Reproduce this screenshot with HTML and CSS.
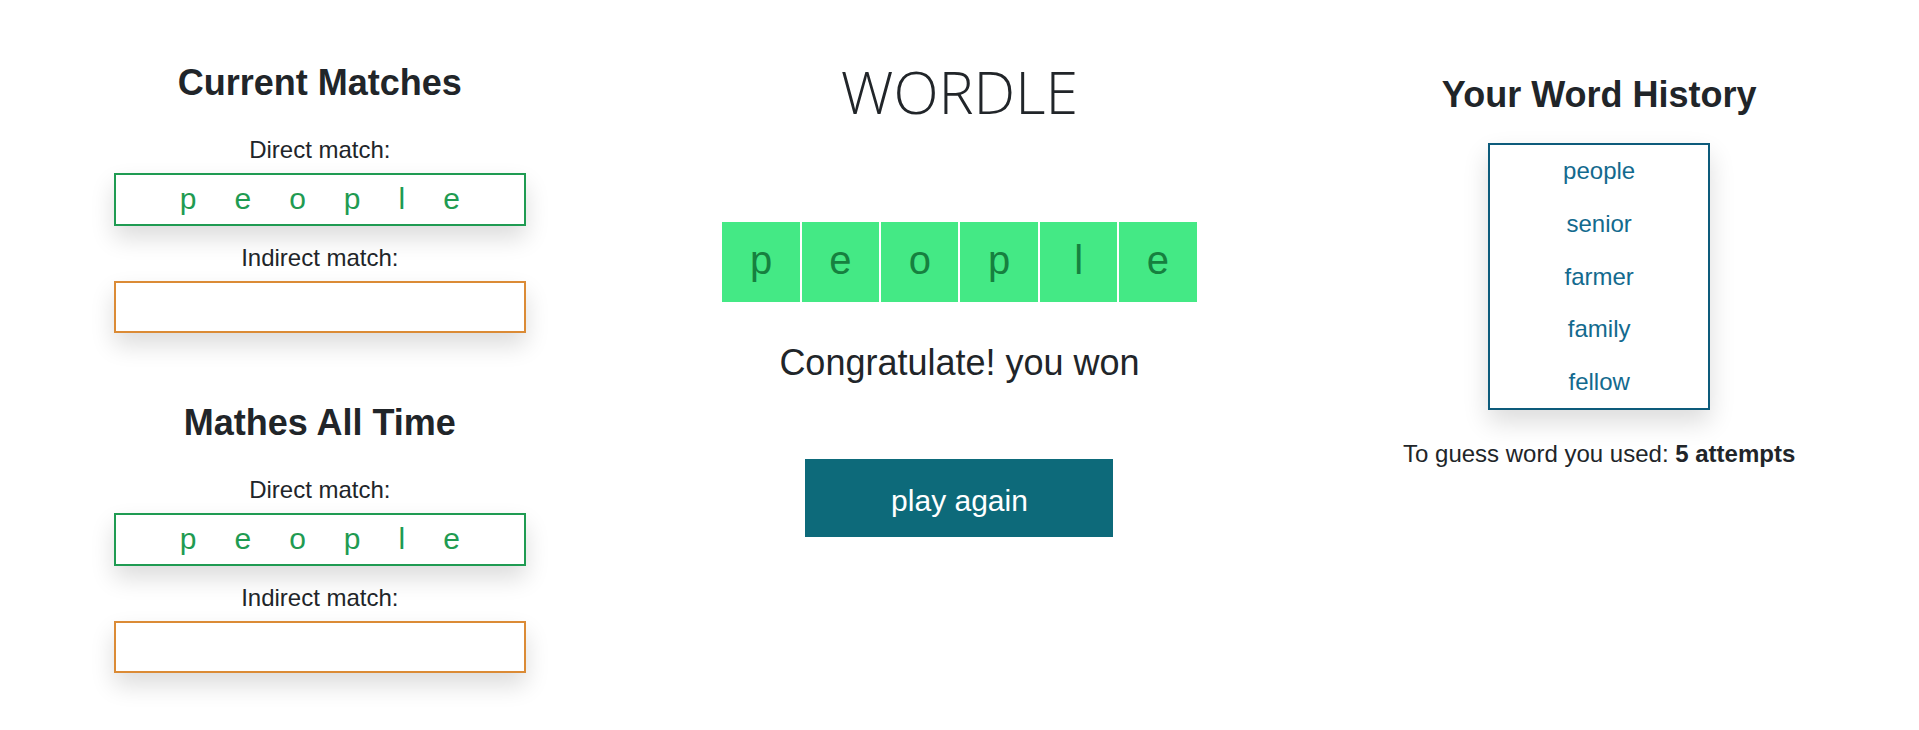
FILE: index.html
```html
<!DOCTYPE html>
<html lang="en">
<head>
<meta charset="utf-8">
<title>Wordle</title>
<link rel="stylesheet" href="styles.css">
</head>
<body>
<div class="page">
  <section class="col col-left">
    <div class="match-group">
      <h4 class="col-title">Current Matches</h4>
      <div class="label">Direct match:</div>
      <div class="match-box direct"><span>p</span><span>e</span><span>o</span><span>p</span><span>l</span><span>e</span></div>
      <div class="label">Indirect match:</div>
      <div class="match-box indirect"></div>
    </div>
    <div class="match-group second">
      <h4 class="col-title">Mathes All Time</h4>
      <div class="label">Direct match:</div>
      <div class="match-box direct"><span>p</span><span>e</span><span>o</span><span>p</span><span>l</span><span>e</span></div>
      <div class="label">Indirect match:</div>
      <div class="match-box indirect"></div>
    </div>
  </section>

  <section class="col col-mid">
    <h1 class="logo">WORDLE</h1>
    <div class="tiles">
      <div class="tile">p</div><div class="tile">e</div><div class="tile">o</div><div class="tile">p</div><div class="tile">l</div><div class="tile">e</div>
    </div>
    <p class="result">Congratulate! you won</p>
    <button class="play-btn">play again</button>
  </section>

  <section class="col col-right">
    <h4 class="col-title history-title">Your Word History</h4>
    <ul class="history">
      <li>people</li>
      <li>senior</li>
      <li>farmer</li>
      <li>family</li>
      <li>fellow</li>
    </ul>
    <p class="attempts">To guess word you used: <b>5 attempts</b></p>
  </section>
</div>
</body>
</html>
```

FILE: styles.css
```css
html, body {
  margin: 0;
  padding: 0;
  background: #ffffff;
}

body {
  font-family: "Liberation Sans", Arial, sans-serif;
  font-size: 24px;
  line-height: 1.5;
  color: #212529;
}

.page {
  display: grid;
  grid-template-columns: 1fr 1fr 1fr;
  width: 1919px;
  padding-bottom: 40px;
}

.col {
  display: flex;
  flex-direction: column;
  align-items: center;
}

.col-title {
  margin: 0;
  font-size: 36px;
  font-weight: 700;
  line-height: 1.2;
}

/* left column */
.col-left {
  padding-top: 61px;
}

.match-group {
  display: flex;
  flex-direction: column;
  align-items: center;
  width: 412px;
}

.match-group.second {
  margin-top: 54px;
}

.match-group .col-title {
  margin-bottom: 28px;
}

.label {
  margin-bottom: 5px;
}

.match-box {
  box-sizing: border-box;
  width: 412px;
  height: 53px;
  background: #fff;
  box-shadow: 0 12px 24px rgba(0, 0, 0, 0.14);
  display: flex;
  justify-content: center;
  margin-bottom: 14px;
}

.match-box.direct {
  border: 2px solid #1f9b52;
  color: #1f9b52;
  font-size: 30px;
  line-height: 47px;
}

.match-box.direct span {
  margin: 0 19px;
}

.match-box.indirect {
  border: 2px solid #db8b36;
  height: 52px;
}

/* middle column */
.col-mid {
  padding-top: 56px;
}

.logo {
  margin: 0;
  font-family: "Open Sans", "Liberation Sans", sans-serif;
  font-weight: 300;
  font-size: 59px;
  line-height: 1.2;
  color: #212529;
}

.tiles {
  display: flex;
  margin-top: 94px;
}

.tile {
  box-sizing: border-box;
  width: 79.4px;
  height: 82px;
  border: 1px solid #ffffff;
  background: #44e985;
  color: #16803f;
  font-size: 40px;
  line-height: 76px;
  text-align: center;
}

.result {
  margin: 33px 0 0;
  font-size: 36px;
  line-height: 54px;
}

.play-btn {
  margin-top: 69px;
  width: 308px;
  height: 78px;
  border: none;
  border-radius: 0;
  background: #0d6a7a;
  color: #ffffff;
  font-family: "Liberation Sans", Arial, sans-serif;
  font-size: 30px;
  line-height: 45px;
  padding: 6px 0 0;
}

/* right column */
.col-right {
  padding-top: 73px;
}

.history-title {
  margin-bottom: 27px;
}

.history {
  box-sizing: border-box;
  list-style: none;
  margin: 0;
  padding: 0;
  width: 222px;
  height: 267px;
  border: 2px solid #0d5b7b;
  box-shadow: 0 12px 24px rgba(0, 0, 0, 0.14);
  color: #136a8e;
  text-align: center;
}

.history li {
  padding: 8.3px 0;
  line-height: 36px;
}

.attempts {
  margin: 26px 0 0;
}

.attempts b {
  font-weight: 700;
}
```
